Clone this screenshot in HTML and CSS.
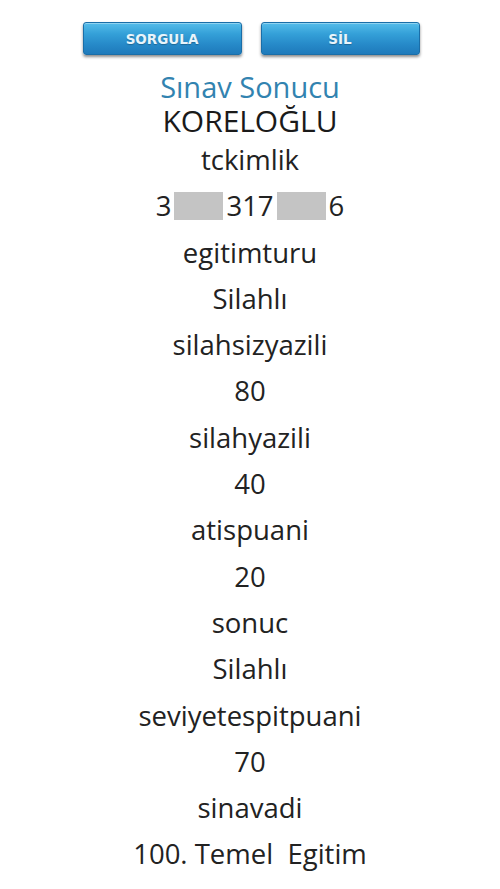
FILE: index.html
```html
<!DOCTYPE html>
<html lang="tr">
<head>
<meta charset="utf-8">
<title>Sınav Sonucu</title>
<link rel="stylesheet" href="styles.css">
</head>
<body>
<div class="page">
  <div class="buttons">
    <button class="btn">SORGULA</button>
    <button class="btn">SİL</button>
  </div>
  <div class="title">Sınav Sonucu</div>
  <div class="name">KOREL OĞLU</div>
  <div class="rows">
    <div class="row">tckimlik</div>
    <div class="row">3<span class="mask"></span>317<span class="mask"></span>6</div>
    <div class="row">egitimturu</div>
    <div class="row">Silahlı</div>
    <div class="row">silahsizyazili</div>
    <div class="row">80</div>
    <div class="row">silahyazili</div>
    <div class="row">40</div>
    <div class="row">atispuani</div>
    <div class="row">20</div>
    <div class="row">sonuc</div>
    <div class="row">Silahlı</div>
    <div class="row">seviyetespitpuani</div>
    <div class="row">70</div>
    <div class="row">sinavadi</div>
    <div class="row">100. Temel&nbsp; Egitim</div>
  </div>
</div>
</body>
</html>
```
FILE: styles.css
```css
html, body {
  margin: 0;
  padding: 0;
  background: #ffffff;
}
.page {
  width: 500px;
  font-family: "Open Sans", "Noto Sans", sans-serif;
  color: #222222;
  text-align: center;
}
.buttons {
  display: flex;
  justify-content: center;
  gap: 19px;
  padding-top: 22px;
  padding-left: 2px;
}
.btn {
  width: 159px;
  height: 33px;
  border: 1px solid #1a6ea8;
  border-radius: 3px;
  background: linear-gradient(to bottom, #55bdea 0%, #34a0d8 35%, #2689c8 70%, #1e7abb 100%);
  box-shadow: 0 2px 3px rgba(0,0,0,0.45), inset 0 1px 0 rgba(255,255,255,0.35);
  color: #e8f4fb;
  text-shadow: 0 1px 1px rgba(0,0,0,0.25);
  font-family: "DejaVu Sans", Verdana, sans-serif;
  font-weight: bold;
  font-size: 13.5px;
  padding: 0;
}
.title {
  margin-top: 15px;
  font-size: 29px;
  line-height: 34px;
  color: #3283b0;
}
.name {
  font-size: 30px;
  line-height: 34px;
  color: #1a1a1a;
  word-spacing: -8px;
}
.rows {
  display: flex;
  flex-direction: column;
  margin-top: -1px;
}
.row {
  font-size: 27.5px;
  line-height: 46.3px;
}
.mask {
  display: inline-block;
  width: 49px;
  height: 28px;
  background: #c4c4c4;
  vertical-align: -4px;
  margin: 0 3px;
}
```
